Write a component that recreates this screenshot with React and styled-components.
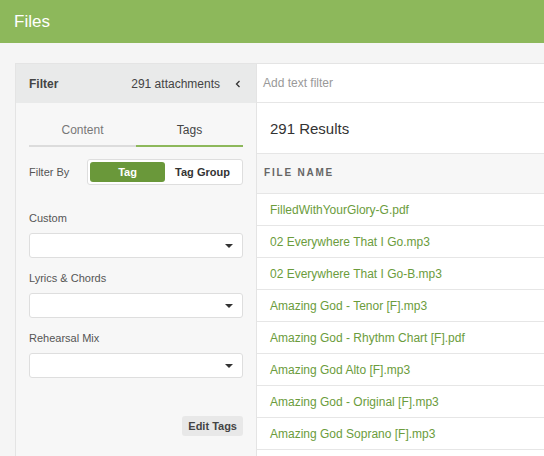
import React, { useState } from "react";
import styled, { createGlobalStyle } from "styled-components";

const GlobalStyle = createGlobalStyle`
  body {
    margin: 0;
    background: #f5f5f5;
    font-family: "Liberation Sans", Arial, sans-serif;
    color: #333;
  }
`;

// Styles
const Header = styled.div`
  height: 43px;
  background: #8db85b;
  display: flex;
  align-items: center;
  padding: 0 14px;
  color: #fff;
  font-size: 17px;
  box-sizing: border-box;
`;

const Body = styled.div`
  display: flex;
  padding: 20px 0 0 15px;
  height: 413px;
  box-sizing: border-box;
  overflow: hidden;
`;

const Sidebar = styled.div`
  width: 241px;
  flex-shrink: 0;
  display: flex;
  flex-direction: column;
  border-left: 1px solid #e4e4e4;
  border-top: 1px solid #e4e4e4;
  background: #f7f7f7;
  box-sizing: border-box;
`;

const SideHeader = styled.div`
  height: 39px;
  flex-shrink: 0;
  background: #e9eaea;
  display: flex;
  align-items: center;
  padding: 0 14px 0 13px;
  font-size: 12px;
`;

const SideTitle = styled.div`
  font-weight: bold;
  color: #444;
  flex: 1;
`;

const Count = styled.div`
  color: #444;
  margin-right: 14px;
`;

const Chevron = styled.svg`
  width: 8px;
  height: 8px;
`;

const SideContent = styled.div`
  padding: 0 13px 0 13px;
  display: flex;
  flex-direction: column;
`;

const Tabs = styled.div`
  display: flex;
  height: 44px;
  flex-shrink: 0;
`;

const Tab = styled.div`
  flex: 1;
  display: flex;
  align-items: center;
  justify-content: center;
  font-size: 12px;
  color: ${(p) => (p.$active ? "#444" : "#777")};
  border-bottom: 2px solid ${(p) => (p.$active ? "#8db85b" : "#dcdcdc")};
  padding-top: 12px;
`;

const FilterRow = styled.div`
  display: flex;
  align-items: center;
  margin-top: 12px;
  font-size: 11px;
  color: #555;
`;

const FilterLabel = styled.div`
  width: 58px;
`;

const Segmented = styled.div`
  flex: 1;
  display: flex;
  height: 26px;
  padding: 2px;
  box-sizing: border-box;
  border: 1px solid #dedede;
  border-radius: 3px;
  background: #fff;
`;

const Segment = styled.div`
  flex: 1;
  display: flex;
  align-items: center;
  justify-content: center;
  font-size: 11px;
  font-weight: bold;
  border-radius: 3px;
  color: ${(p) => (p.$active ? "#fff" : "#333")};
  background: ${(p) => (p.$active ? "#6a983a" : "transparent")};
`;

const FieldLabel = styled.div`
  font-size: 11px;
  color: #555;
  margin-top: ${(p) => p.$top}px;
  margin-bottom: 9px;
`;

const Select = styled.div`
  height: 25px;
  flex-shrink: 0;
  box-sizing: border-box;
  border: 1px solid #dedede;
  border-radius: 3px;
  background: #fff;
  display: flex;
  align-items: center;
  justify-content: flex-end;
  padding-right: 9px;
`;

const Caret = styled.div`
  width: 0;
  height: 0;
  border-left: 4px solid transparent;
  border-right: 4px solid transparent;
  border-top: 4px solid #333;
`;

const EditRow = styled.div`
  display: flex;
  justify-content: flex-end;
  margin-top: 38px;
`;

const EditButton = styled.div`
  background: #e8e8e8;
  border-radius: 3px;
  padding: 4px 6px;
  font-size: 11px;
  font-weight: bold;
  color: #444;
`;

const Main = styled.div`
  flex: 1;
  background: #fff;
  border-left: 1px solid #e4e4e4;
  border-top: 1px solid #e4e4e4;
  display: flex;
  flex-direction: column;
`;

const TextFilter = styled.div`
  height: 38px;
  flex-shrink: 0;
  display: flex;
  align-items: center;
  padding-left: 6px;
  font-size: 12px;
  color: #999;
  border-bottom: 1px solid #e6e6e6;
`;

const Results = styled.div`
  height: 50px;
  flex-shrink: 0;
  display: flex;
  align-items: center;
  padding-left: 13px;
  font-size: 15px;
  color: #333;
  border-bottom: 1px solid #e6e6e6;
`;

const ColHead = styled.div`
  height: 40px;
  flex-shrink: 0;
  display: flex;
  align-items: center;
  padding-left: 7px;
  padding-bottom: 2px;
  box-sizing: border-box;
  background: #f7f7f7;
  font-size: 10px;
  font-weight: bold;
  letter-spacing: 1.8px;
  color: #666;
  border-bottom: 1px solid #e6e6e6;
`;

const FileRow = styled.div`
  height: 31px;
  display: flex;
  align-items: center;
  padding-left: 13px;
  font-size: 12px;
  color: #6b9c3c;
  border-bottom: 1px solid #e6e6e6;
  flex-shrink: 0;
`;

// Data
const files = [
  "FilledWithYourGlory-G.pdf",
  "02 Everywhere That I Go.mp3",
  "02 Everywhere That I Go-B.mp3",
  "Amazing God - Tenor [F].mp3",
  "Amazing God - Rhythm Chart [F].pdf",
  "Amazing God Alto [F].mp3",
  "Amazing God - Original [F].mp3",
  "Amazing God Soprano [F].mp3",
];

const fields = [
  { label: "Custom", top: 27 },
  { label: "Lyrics & Chords", top: 14 },
  { label: "Rehearsal Mix", top: 14 },
];

export default function App() {
  const [tab, setTab] = useState("Tags");
  const [by, setBy] = useState("Tag");

  return (
    <>
      <GlobalStyle />
      <Header>Files</Header>
      <Body>
        <Sidebar>
          <SideHeader>
            <SideTitle>Filter</SideTitle>
            <Count>291 attachments</Count>
            <Chevron viewBox="0 0 8 8">
              <path d="M5.5 1 L2.5 4 L5.5 7" fill="none" stroke="#333" strokeWidth="1.3" />
            </Chevron>
          </SideHeader>
          <SideContent>
            <Tabs>
              {["Content", "Tags"].map((t) => (
                <Tab key={t} $active={tab === t} onClick={() => setTab(t)}>
                  {t}
                </Tab>
              ))}
            </Tabs>
            <FilterRow>
              <FilterLabel>Filter By</FilterLabel>
              <Segmented>
                {["Tag", "Tag Group"].map((s) => (
                  <Segment key={s} $active={by === s} onClick={() => setBy(s)}>
                    {s}
                  </Segment>
                ))}
              </Segmented>
            </FilterRow>
            {fields.map((f) => (
              <React.Fragment key={f.label}>
                <FieldLabel $top={f.top}>{f.label}</FieldLabel>
                <Select>
                  <Caret />
                </Select>
              </React.Fragment>
            ))}
            <EditRow>
              <EditButton>Edit Tags</EditButton>
            </EditRow>
          </SideContent>
        </Sidebar>
        <Main>
          <TextFilter>Add text filter</TextFilter>
          <Results>291 Results</Results>
          <ColHead>FILE NAME</ColHead>
          {files.map((f) => (
            <FileRow key={f}>{f}</FileRow>
          ))}
        </Main>
      </Body>
    </>
  );
}
